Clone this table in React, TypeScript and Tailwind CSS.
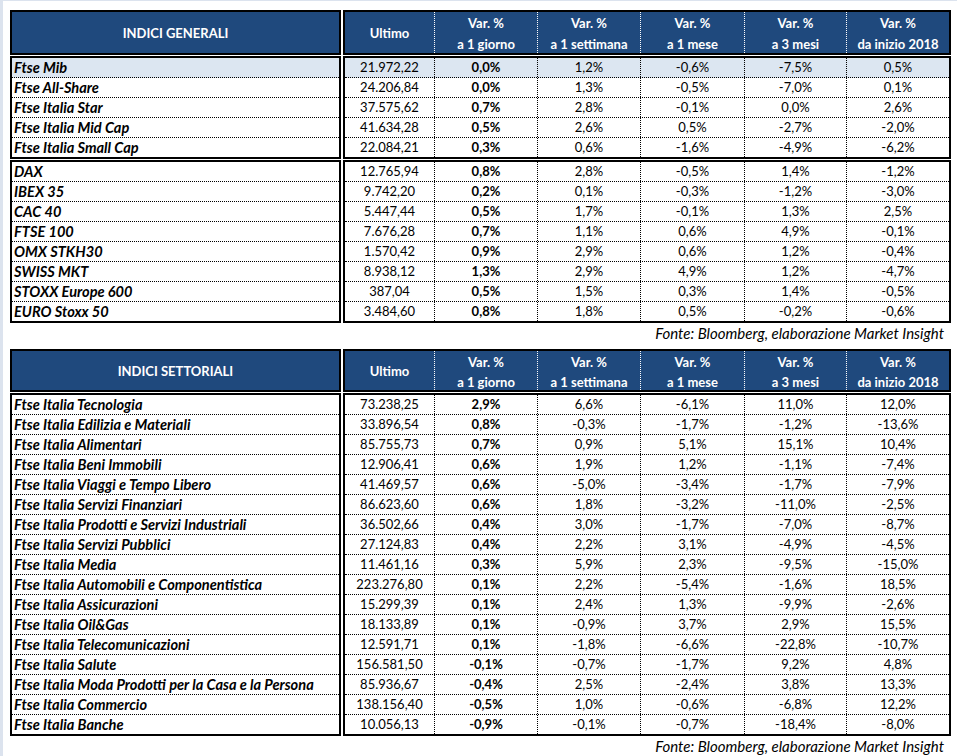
type Row = [string, string, string, string, string, string, string];

const generali1: Row[] = [
  ["Ftse Mib", "21.972,22", "0,0%", "1,2%", "-0,6%", "-7,5%", "0,5%"],
  ["Ftse All-Share", "24.206,84", "0,0%", "1,3%", "-0,5%", "-7,0%", "0,1%"],
  ["Ftse Italia Star", "37.575,62", "0,7%", "2,8%", "-0,1%", "0,0%", "2,6%"],
  ["Ftse Italia Mid Cap", "41.634,28", "0,5%", "2,6%", "0,5%", "-2,7%", "-2,0%"],
  ["Ftse Italia Small Cap", "22.084,21", "0,3%", "0,6%", "-1,6%", "-4,9%", "-6,2%"],
];

const generali2: Row[] = [
  ["DAX", "12.765,94", "0,8%", "2,8%", "-0,5%", "1,4%", "-1,2%"],
  ["IBEX 35", "9.742,20", "0,2%", "0,1%", "-0,3%", "-1,2%", "-3,0%"],
  ["CAC 40", "5.447,44", "0,5%", "1,7%", "-0,1%", "1,3%", "2,5%"],
  ["FTSE 100", "7.676,28", "0,7%", "1,1%", "0,6%", "4,9%", "-0,1%"],
  ["OMX STKH30", "1.570,42", "0,9%", "2,9%", "0,6%", "1,2%", "-0,4%"],
  ["SWISS MKT", "8.938,12", "1,3%", "2,9%", "4,9%", "1,2%", "-4,7%"],
  ["STOXX Europe 600", "387,04", "0,5%", "1,5%", "0,3%", "1,4%", "-0,5%"],
  ["EURO Stoxx 50", "3.484,60", "0,8%", "1,8%", "0,5%", "-0,2%", "-0,6%"],
];

const settoriali: Row[] = [
  ["Ftse Italia Tecnologia", "73.238,25", "2,9%", "6,6%", "-6,1%", "11,0%", "12,0%"],
  ["Ftse Italia Edilizia e Materiali", "33.896,54", "0,8%", "-0,3%", "-1,7%", "-1,2%", "-13,6%"],
  ["Ftse Italia Alimentari", "85.755,73", "0,7%", "0,9%", "5,1%", "15,1%", "10,4%"],
  ["Ftse Italia Beni Immobili", "12.906,41", "0,6%", "1,9%", "1,2%", "-1,1%", "-7,4%"],
  ["Ftse Italia Viaggi e Tempo Libero", "41.469,57", "0,6%", "-5,0%", "-3,4%", "-1,7%", "-7,9%"],
  ["Ftse Italia Servizi Finanziari", "86.623,60", "0,6%", "1,8%", "-3,2%", "-11,0%", "-2,5%"],
  ["Ftse Italia Prodotti e Servizi Industriali", "36.502,66", "0,4%", "3,0%", "-1,7%", "-7,0%", "-8,7%"],
  ["Ftse Italia Servizi Pubblici", "27.124,83", "0,4%", "2,2%", "3,1%", "-4,9%", "-4,5%"],
  ["Ftse Italia Media", "11.461,16", "0,3%", "5,9%", "2,3%", "-9,5%", "-15,0%"],
  ["Ftse Italia Automobili e Componentistica", "223.276,80", "0,1%", "2,2%", "-5,4%", "-1,6%", "18,5%"],
  ["Ftse Italia Assicurazioni", "15.299,39", "0,1%", "2,4%", "1,3%", "-9,9%", "-2,6%"],
  ["Ftse Italia Oil&Gas", "18.133,89", "0,1%", "-0,9%", "3,7%", "2,9%", "15,5%"],
  ["Ftse Italia Telecomunicazioni", "12.591,71", "0,1%", "-1,8%", "-6,6%", "-22,8%", "-10,7%"],
  ["Ftse Italia Salute", "156.581,50", "-0,1%", "-0,7%", "-1,7%", "9,2%", "4,8%"],
  ["Ftse Italia Moda Prodotti per la Casa e la Persona", "85.936,67", "-0,4%", "2,5%", "-2,4%", "3,8%", "13,3%"],
  ["Ftse Italia Commercio", "138.156,40", "-0,5%", "1,0%", "-0,6%", "-6,8%", "12,2%"],
  ["Ftse Italia Banche", "10.056,13", "-0,9%", "-0,1%", "-0,7%", "-18,4%", "-8,0%"],
];

const colWidths = ["w-[89px]", "w-[103px]", "w-[103px]", "w-[104px]", "w-[102px]", "w-[103px]"];
const subHeads = ["a 1 giorno", "a 1 settimana", "a 1 mese", "a 3 mesi", "da inizio 2018"];

const HeaderBand = ({ title, height, leading, pad }: { title: string; height: string; leading: string; pad: string }) => (
  <div className={`flex gap-[2px] ${height}`}>
    <div className={`w-[331px] border-2 border-black bg-[#1f497d] flex items-center justify-center text-white font-bold text-[13px] ${pad}`}>
      {title}
    </div>
    <div className="w-[608px] border-2 border-black bg-[#1f497d] flex text-white font-bold text-[13px]">
      <div className={`${colWidths[0]} flex items-center justify-center ${pad}`}>Ultimo</div>
      {subHeads.map((s, i) => (
        <div
          key={s}
          className={`${colWidths[i + 1]} border-l border-dotted border-white flex flex-col items-center justify-center ${leading} ${pad}`}
        >
          <span>Var. %</span>
          <span>{s}</span>
        </div>
      ))}
    </div>
  </div>
);

const DataBand = ({ rows, highlightFirst = false }: { rows: Row[]; highlightFirst?: boolean }) => {
  const rowCls = (i: number) =>
    i < rows.length - 1 ? "h-[20px] border-b border-dotted border-black" : "h-[19px]";
  const bg = (i: number) => (highlightFirst && i === 0 ? "bg-[#dce6f1]" : "");
  return (
    <div className="flex gap-[2px] mt-[1px]">
      <div className="w-[331px] border-2 border-black">
        {rows.map((r, i) => (
          <div key={r[0]} className={`${rowCls(i)} ${bg(i)} flex items-center pl-[2px] font-bold italic text-[14.6px]`}>
            {r[0]}
          </div>
        ))}
      </div>
      <div className="w-[608px] border-2 border-black">
        {rows.map((r, i) => (
          <div key={r[0]} className={`${rowCls(i)} ${bg(i)} flex text-[13px]`}>
            {r.slice(1).map((v, j) => (
              <div
                key={j}
                className={`${colWidths[j]} flex items-center justify-center ${j > 0 ? "border-l border-dotted border-black" : ""} ${j === 1 ? "font-bold" : ""}`}
              >
                {v}
              </div>
            ))}
          </div>
        ))}
      </div>
    </div>
  );
};

const Fonte = ({ cls }: { cls: string }) => (
  <div className={`w-[941px] flex justify-end pr-[7px] italic text-[15px] ${cls}`}>
    Fonte: Bloomberg, elaborazione Market Insight
  </div>
);

export default function App() {
  return (
    <div className="w-[957px] h-[756px] overflow-hidden bg-white border-l-[3px] border-t border-[#dce3ee] text-black font-['Lato',sans-serif]">
      <div className="pl-[7px] pt-[9px]">
        <HeaderBand title="INDICI GENERALI" height="h-[45px]" leading="leading-[21px]" pad="pt-[3px]" />
        <DataBand rows={generali1} highlightFirst />
        <DataBand rows={generali2} />
        <Fonte cls="h-[20px] items-center mb-[6px]" />
        <HeaderBand title="INDICI SETTORIALI" height="h-[43px]" leading="leading-[20px]" pad="pt-[2px]" />
        <DataBand rows={settoriali} />
        <Fonte cls="h-[20px] items-center" />
      </div>
    </div>
  );
}
